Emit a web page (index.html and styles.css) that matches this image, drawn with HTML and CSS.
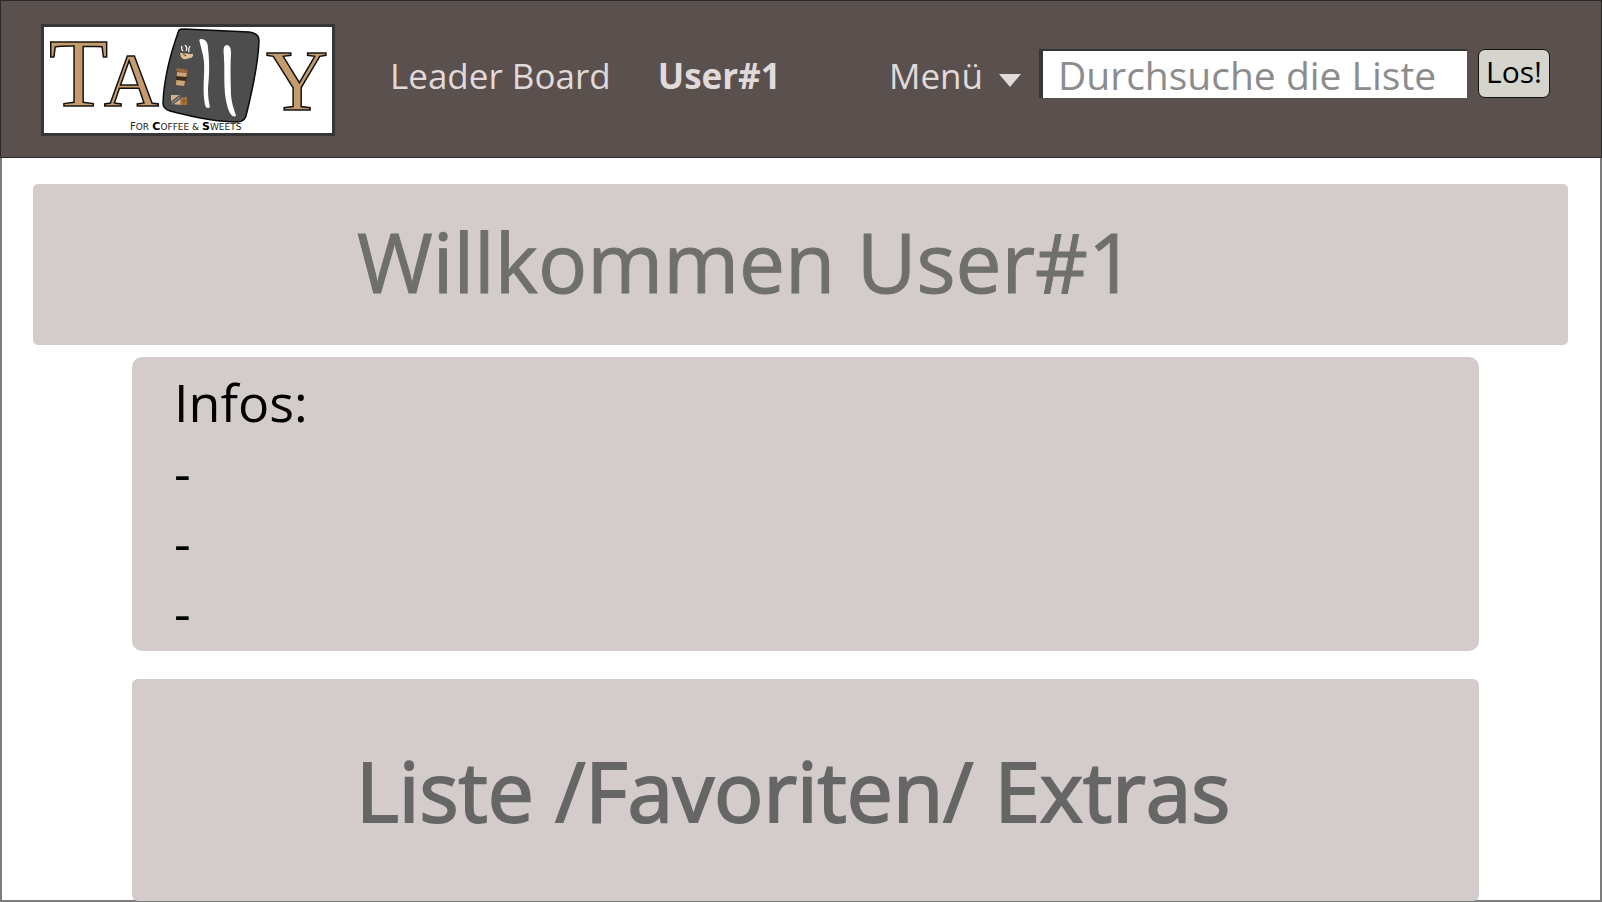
FILE: index.html
```
<!DOCTYPE html>
<html lang="de">
<head>
<meta charset="utf-8">
<title>Tally – For Coffee &amp; Sweets</title>
<link rel="stylesheet" href="styles.css">
</head>
<body>
<div class="page">
  <header class="topbar">
    <a class="logo" href="#">
      <svg class="logo-art" viewBox="0 -1 288 106" role="img" aria-label="Tally">
        <g class="logo-letters">
          <text x="5" y="78" font-size="97">T</text>
          <text x="60" y="78" font-size="76">A</text>
          <text x="222" y="82" font-size="86">Y</text>
        </g>
        <path class="slab" d="M135 2 Q136 1 140 1 L205 4 Q215 5 215 13 C214 40 207 68 202 88 Q200 94 193 94 C172 94 145 88 126 83 Q119 81 119 75 C120 48 127 24 135 2Z"/>
        <path fill="#fff" d="M157 11 C161 11 164 14 164 20 C166 37 165 50 164 60 C164 69 165 75 166 79 C164 81 162 80 161 77 C158 60 161 46 160 34 C159 25 157 20 156 15 C155 13 155 11 157 11Z"/>
        <path fill="#fff" d="M182 17 C186 17 187 20 187 25 C186 42 187 60 187 67 C188 78 191 83 192 88 C188 90 185 85 183 77 C179 62 181 43 180 31 C180 26 179 23 180 19Z"/>
        <path fill="#e2bd98" d="M136 25 L147 26 Q150 25 149 28 Q147 31 145 30 Q140 33 137 29Z"/>
        <path fill="none" stroke="#fff" stroke-width="1.2" d="M139 23 Q137 21 138 18 M142 23 Q144 20 141 17 M145 24 Q144 21 146 18"/>
        <path stroke="#333" stroke-width="1" d="M139 26 L142 28"/>
        <path fill="#9c6838" d="M133 40 L144 42 L143 45 L132 43Z"/>
        <path fill="#cfa173" d="M133 44 L143 45 L140 58 L132 57Z"/>
        <path fill="#3b2a1c" d="M132 48 L143 49 L142 53 L132 52Z"/>
        <path fill="#d9b189" d="M127 67 L136 67 L138 77 L127 76Z"/>
        <path fill="#ad7640" d="M137 69 L143 69 L143 77 L136 77Z"/>
        <path stroke="#6a4522" stroke-width=".6" d="M137 73 H143 M140 69 V77"/>
        <path fill="none" stroke="#555" stroke-width="4" stroke-linecap="round" d="M128 75 L136 69"/>
        <path fill="none" stroke="#aaa" stroke-width="1" d="M128 75 L136 69"/>
        <text class="tagline" x="86" y="102">F<tspan class="small">OR</tspan> <tspan class="cap">C</tspan><tspan class="small">OFFEE &amp; </tspan><tspan class="cap">S</tspan><tspan class="small">WEETS</tspan></text>
      </svg>
    </a>
    <nav class="nav">
      <a class="nav-link" href="#">Leader Board</a>
      <a class="nav-link current" href="#">User#1</a>
    </nav>
    <button class="menu" type="button" aria-haspopup="true">Menü
      <svg class="caret" viewBox="0 0 22 13" aria-hidden="true"><path d="M0 0H22L11 13Z"/></svg>
    </button>
    <form class="search">
      <input class="search-box" type="text" aria-label="Durchsuche die Liste" placeholder="Durchsuche die Liste">
      <button class="go" type="button">Los!</button>
    </form>
  </header>
  <main class="content">
    <section class="banner"><h1 class="title">Willkommen User#1</h1></section>
    <section class="panel infos">
      <h2 class="infos-title">Infos:</h2>
      <ul class="infos-list"><li>-</li><li>-</li><li>-</li></ul>
    </section>
    <section class="panel lists"><h2 class="title medium">Liste /Favoriten/ Extras</h2></section>
  </main>
</div>
</body>
</html>
```
FILE: styles.css
```
* { box-sizing: border-box; }
body {
  margin: 0;
  background: #fff;
  font-family: "Open Sans", "Noto Sans", sans-serif;
}
h1, h2, ul { margin: 0; padding: 0; font-weight: 400; }
.page {
  min-height: 100vh;
  display: flex;
  flex-direction: column;
  border: solid #7d7d7d;
  border-width: 0 2px 2px;
}
.topbar {
  display: flex;
  align-items: flex-start;
  height: 158px;
  margin: 0 -2px;
  padding: 0 51px 0 40px;
  background: #5a504e;
  border: 1px solid #2c2827;
}
.logo {
  margin-top: 23px;
  width: 294px;
  flex: none;
  background: #fff;
  border: 3px solid #363636;
}
.logo-art { display: block; width: 100%; overflow: visible; }
.logo-letters {
  font-family: "Liberation Serif", serif;
  fill: #c69c6d;
  stroke: #111;
  stroke-width: 1.5;
}
.slab { fill: #4d4d4d; stroke: #0a0a0a; stroke-width: 1.5; }
.tagline { font: 10px "DejaVu Sans", sans-serif; fill: #222; }
.small { font-size: 9px; }
.cap { font-size: 11px; font-weight: 700; fill: #000; }
.nav { display: flex; gap: 47px; margin: 47px 0 0 55px; }
.nav-link, .menu {
  color: #e0dada;
  font-size: 35px;
  line-height: 56px;
  text-decoration: none;
  white-space: nowrap;
}
.current { font-weight: 700; }
.menu {
  display: flex;
  align-items: center;
  gap: 16px;
  margin: 47px 18px 0 auto;
  padding: 0;
  border: 0;
  background: none;
  font-family: inherit;
}
.caret { width: 22px; height: 13px; margin-top: 8px; fill: #e0dada; }
.search { display: flex; gap: 11px; margin-top: 48px; }
.search-box {
  width: 428px;
  height: 49px;
  padding: 0 0 0 15px;
  border: solid #363636;
  border-width: 2px 0 0 4px;
  background: #fff;
  color: #8c8c8c;
  font: 39px "Open Sans", "Noto Sans", sans-serif;
}
.search-box::placeholder { color: #8c8c8c; opacity: 1; }
.go {
  width: 72px;
  height: 49px;
  padding: 0 0 5px;
  border: 1px solid #111;
  border-radius: 7px;
  background: #d5d5cd;
  color: #000;
  font: 30px "Open Sans", "Noto Sans", sans-serif;
}
.content { flex: 1; display: flex; flex-direction: column; padding: 26px 32px 0 31px; }
.banner { height: 161px; padding-left: 324px; border-radius: 5px; background: #d4cbcb; }
.title { color: #6f6f6d; font-size: 82px; line-height: 154px; white-space: nowrap; -webkit-text-stroke: 1px #6f6f6d; }
.medium { color: #666; line-height: 222px; -webkit-text-stroke: 2px #666; }
.panel { margin: 0 89px 0 99px; background: #d4cbcb; }
.infos { height: 294px; margin-top: 12px; padding: 10px 0 0 42px; border-radius: 10px; }
.infos-title, .infos-list { font-size: 52px; line-height: 70px; }
.infos-list { list-style: none; }
.lists { flex: 1; margin-top: 28px; padding-left: 224px; border-radius: 6px; margin-bottom: -1px; }
```
